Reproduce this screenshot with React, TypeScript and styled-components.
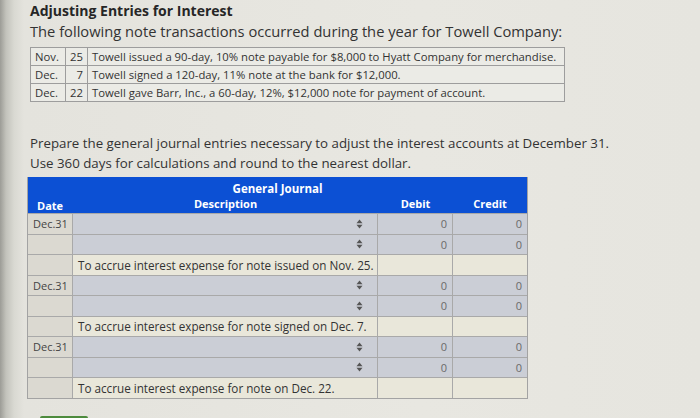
import React from 'react';
import styled, { createGlobalStyle } from 'styled-components';

const Global = createGlobalStyle`
  html, body { margin: 0; padding: 0; }
  body {
    width: 700px;
    height: 418px;
    overflow: hidden;
    font-family: "Open Sans", "Noto Sans", sans-serif;
    color: #2e2e2e;
    background: linear-gradient(to right, #9c9c96 0px, #c2c2bb 6px, #d9d9d2 14px, #e4e3dd 24px, #e8e7e1 60%, #e6e5df 100%);
  }
`;

const Page = styled.div`
  height: 418px;
  overflow: hidden;
  padding: 1px 0 0 30px;
  box-sizing: border-box;
`;

const Title = styled.div`
  font-size: 14px;
  font-weight: 700;
  line-height: 20px;
  color: #262626;
`;

const Intro = styled.div`
  font-size: 14.7px;
  line-height: 21px;
  color: #333;
`;

const NotesTable = styled.table`
  margin-top: 5px;
  width: 535px;
  border-collapse: collapse;
  font-size: 11.3px;
  color: #333;
  background: #ebebe6;
`;

const NoteCell = styled.td<{ $align?: string; $w?: number }>`
  border: 1px solid #9d9d9d;
  height: 17px;
  padding: 0 4px;
  text-align: ${p => p.$align || 'left'};
  width: ${p => (p.$w ? `${p.$w}px` : 'auto')};
  white-space: nowrap;
`;

const Instructions = styled.div`
  margin-top: 31px;
  font-size: 13.3px;
  line-height: 20px;
  color: #333;
`;

const Journal = styled.div`
  margin: 4px 0 0 -3px;
  width: 499px;
  border: 1px solid #a3a3a3;
  border-top: none;
`;

const Head = styled.div`
  background: #0c50d4;
  color: #fff;
  font-weight: 700;
  height: 36px;
  display: flex;
  flex-direction: column;
`;

const HeadTitle = styled.div`
  font-size: 11.5px;
  line-height: 16px;
  text-align: center;
  padding-top: 4px;
`;

const Cols = `45px 305px 75px 74px`;

const HeadRow = styled.div`
  display: grid;
  grid-template-columns: ${Cols};
  font-size: 11px;
  line-height: 14px;
`;

const HeadCell = styled.div<{ $align: string; $pad?: string }>`
  text-align: ${p => p.$align};
  padding: ${p => p.$pad || '0'};
`;

const Row = styled.div`
  display: grid;
  grid-template-columns: ${Cols};
  height: 20.5px;
  border-top: 1px solid #a9a9a9;
  box-sizing: border-box;
`;

const DateCell = styled.div`
  background: #dbd9d1;
  font-size: 11px;
  color: #444;
  padding-left: 5px;
  display: flex;
  align-items: center;
  border-right: 1px solid #a9a9a9;
`;

const SelectCell = styled.div`
  background: #cbced6;
  display: flex;
  align-items: center;
  justify-content: flex-end;
  padding-right: 14px;
  border-right: 1px solid #a9a9a9;
`;

const MemoCell = styled.div`
  background: #e9e7da;
  font-size: 11.7px;
  color: #333;
  display: flex;
  align-items: center;
  padding-left: 5px;
  white-space: nowrap;
  border-right: 1px solid #a9a9a9;
`;

const AmountCell = styled.div<{ $memo?: boolean; $last?: boolean }>`
  background: ${p => (p.$memo ? '#e9e7da' : '#cbced6')};
  font-size: 11px;
  color: #6a6a6a;
  display: flex;
  align-items: center;
  justify-content: flex-end;
  padding-right: 5px;
  border-right: ${p => (p.$last ? 'none' : '1px solid #a9a9a9')};
`;

const GreenButton = styled.div`
  margin: 17px 0 0 10px;
  width: 48px;
  height: 22px;
  background: #4d8b3d;
  border-radius: 2px;
`;

const Arrows = () => (
  <svg width="7" height="10" viewBox="0 0 7 10">
    <path d="M0.5 4.2 L3.5 0.6 L6.5 4.2 Z" fill="#555" />
    <path d="M0.5 5.8 L3.5 9.4 L6.5 5.8 Z" fill="#555" />
  </svg>
);

const notes = [
  ['Nov.', '25', 'Towell issued a 90-day, 10% note payable for $8,000 to Hyatt Company for merchandise.'],
  ['Dec.', '7', 'Towell signed a 120-day, 11% note at the bank for $12,000.'],
  ['Dec.', '22', 'Towell gave Barr, Inc., a 60-day, 12%, $12,000 note for payment of account.'],
];

const entries = [
  'To accrue interest expense for note issued on Nov. 25.',
  'To accrue interest expense for note signed on Dec. 7.',
  'To accrue interest expense for note on Dec. 22.',
];

const InputRow = ({ date }: { date?: string }) => (
  <Row>
    <DateCell>{date}</DateCell>
    <SelectCell>
      <Arrows />
    </SelectCell>
    <AmountCell>0</AmountCell>
    <AmountCell $last>0</AmountCell>
  </Row>
);

export default function App() {
  return (
    <>
      <Global />
      <Page>
        <Title>Adjusting Entries for Interest</Title>
        <Intro>The following note transactions occurred during the year for Towell Company:</Intro>
        <NotesTable>
          <tbody>
            {notes.map(n => (
              <tr key={n[2]}>
                <NoteCell $w={26}>{n[0]}</NoteCell>
                <NoteCell $w={11} $align="right">{n[1]}</NoteCell>
                <NoteCell>{n[2]}</NoteCell>
              </tr>
            ))}
          </tbody>
        </NotesTable>
        <Instructions>
          Prepare the general journal entries necessary to adjust the interest accounts at December 31.
          <br />
          Use 360 days for calculations and round to the nearest dollar.
        </Instructions>
        <Journal>
          <Head>
            <HeadTitle>General Journal</HeadTitle>
            <HeadRow>
              <HeadCell $align="left" $pad="2px 0 0 9px">Date</HeadCell>
              <HeadCell $align="center">Description</HeadCell>
              <HeadCell $align="center">Debit</HeadCell>
              <HeadCell $align="center">Credit</HeadCell>
            </HeadRow>
          </Head>
          {entries.map(e => (
            <React.Fragment key={e}>
              <InputRow date="Dec.31" />
              <InputRow />
              <Row>
                <DateCell />
                <MemoCell>{e}</MemoCell>
                <AmountCell $memo />
                <AmountCell $memo $last />
              </Row>
            </React.Fragment>
          ))}
        </Journal>
        <GreenButton />
      </Page>
    </>
  );
}
